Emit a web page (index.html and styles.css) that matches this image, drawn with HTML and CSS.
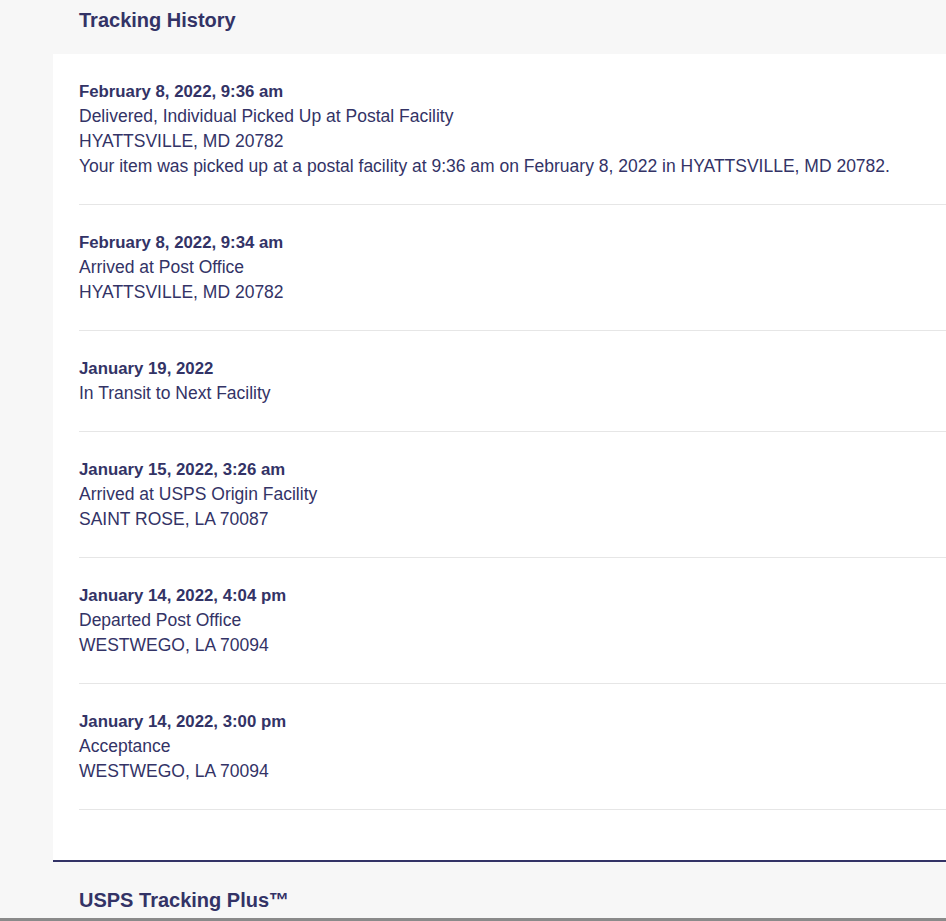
FILE: index.html
```html
<!DOCTYPE html>
<html>
<head>
<meta charset="utf-8">
<link rel="stylesheet" href="styles.css">
</head>
<body>
<div class="page">
  <h2 class="section-title">Tracking History</h2>
  <div class="panel">
    <div class="event">
      <div class="date">February 8, 2022, 9:36 am</div>
      <div>Delivered, Individual Picked Up at Postal Facility</div>
      <div>HYATTSVILLE, MD 20782</div>
      <div>Your item was picked up at a postal facility at 9:36 am on February 8, 2022 in HYATTSVILLE, MD 20782.</div>
    </div>
    <div class="event">
      <div class="date">February 8, 2022, 9:34 am</div>
      <div>Arrived at Post Office</div>
      <div>HYATTSVILLE, MD 20782</div>
    </div>
    <div class="event">
      <div class="date">January 19, 2022</div>
      <div>In Transit to Next Facility</div>
    </div>
    <div class="event">
      <div class="date">January 15, 2022, 3:26 am</div>
      <div>Arrived at USPS Origin Facility</div>
      <div>SAINT ROSE, LA 70087</div>
    </div>
    <div class="event">
      <div class="date">January 14, 2022, 4:04 pm</div>
      <div>Departed Post Office</div>
      <div>WESTWEGO, LA 70094</div>
    </div>
    <div class="event">
      <div class="date">January 14, 2022, 3:00 pm</div>
      <div>Acceptance</div>
      <div>WESTWEGO, LA 70094</div>
    </div>
  </div>
  <h2 class="section-title lower">USPS Tracking Plus™</h2>
</div>
<div class="frame-edge"></div>
</body>
</html>
```
FILE: styles.css
```css
html, body {
  margin: 0;
  padding: 0;
  background: #f7f7f7;
  height: 100%;
  overflow: hidden;
}
body {
  font-family: "Liberation Sans", Arial, Helvetica, sans-serif;
  color: #333366;
  position: relative;
}
.page {
  height: 918px;
  overflow: hidden;
}
.section-title {
  margin: 0;
  padding: 8px 0 0 79px;
  height: 54px;
  box-sizing: border-box;
  font-size: 20px;
  line-height: 24px;
  font-weight: bold;
}
.section-title.lower {
  padding-top: 26px;
  height: auto;
}
.panel {
  margin-left: 53px;
  background: #ffffff;
  padding: 0 0 50px 26px;
  border-bottom: 2px solid #333366;
}
.event {
  padding: 25px 0;
  border-bottom: 1px solid #e6e6e6;
  font-size: 17.5px;
  line-height: 25px;
}
.date {
  font-weight: bold;
  font-size: 16.8px;
}
.frame-edge {
  position: absolute;
  left: 0;
  right: 0;
  top: 918px;
  height: 3px;
  background: #8a8a8a;
}
```
